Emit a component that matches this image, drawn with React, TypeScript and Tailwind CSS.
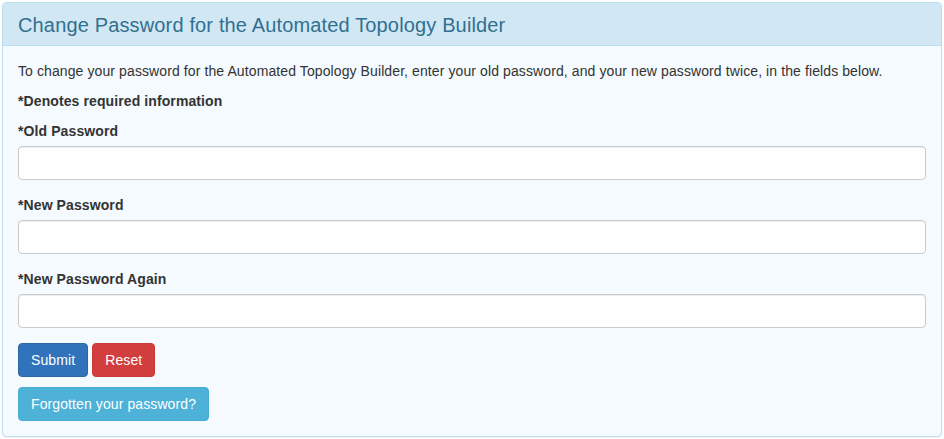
export default function App() {
  const fields = ['*Old Password', '*New Password', '*New Password Again'];

  return (
    <div className="min-h-screen bg-white p-[2px] font-['Liberation_Sans',Arial,sans-serif] text-[14px] leading-[20px] tracking-[0.1px] text-[#333]">
      <div className="rounded-[4px] border border-[#bcdff0] bg-[#f4fafd] shadow-[0_1px_1px_rgba(0,0,0,0.05)]">
        {/* heading */}
        <div className="flex h-[43px] items-center rounded-t-[3px] border-b border-[#bcdff0] bg-[#d1e7f4] px-[15px] pt-[1px]">
          <h3 className="text-[20px] leading-[22px] tracking-[0.15px] text-[#31708f]">
            Change Password for the Automated Topology Builder
          </h3>
        </div>

        {/* body */}
        <div className="p-[15px]">
          <p className="mb-[10px]">
            To change your password for the Automated Topology Builder, enter your old password, and your new password twice, in the fields below.
          </p>
          <p className="mb-[10px] font-bold">*Denotes required information</p>

          <form onSubmit={(e) => e.preventDefault()}>
            {fields.map((label) => (
              <div key={label} className="mb-[15px]">
                <label className="mb-[5px] block font-bold">{label}</label>
                <input
                  type="password"
                  className="block h-[34px] w-full rounded-[4px] border border-[#ccc] bg-white px-3 shadow-[inset_0_1px_1px_rgba(0,0,0,0.075)] outline-none"
                />
              </div>
            ))}

            <div className="flex gap-[4px]">
              <button
                type="submit"
                className="h-[34px] rounded-[4px] border border-[#2b67a8] bg-[#3073bb] px-3 text-white"
              >
                Submit
              </button>
              <button
                type="reset"
                className="h-[34px] rounded-[4px] border border-[#c93a37] bg-[#d23d3d] px-3 text-white"
              >
                Reset
              </button>
            </div>

            <button
              type="button"
              className="mt-[10px] h-[34px] rounded-[4px] border border-[#45acd4] bg-[#4db1d8] px-3 text-white"
            >
              Forgotten your password?
            </button>
          </form>
        </div>
      </div>
    </div>
  );
}
